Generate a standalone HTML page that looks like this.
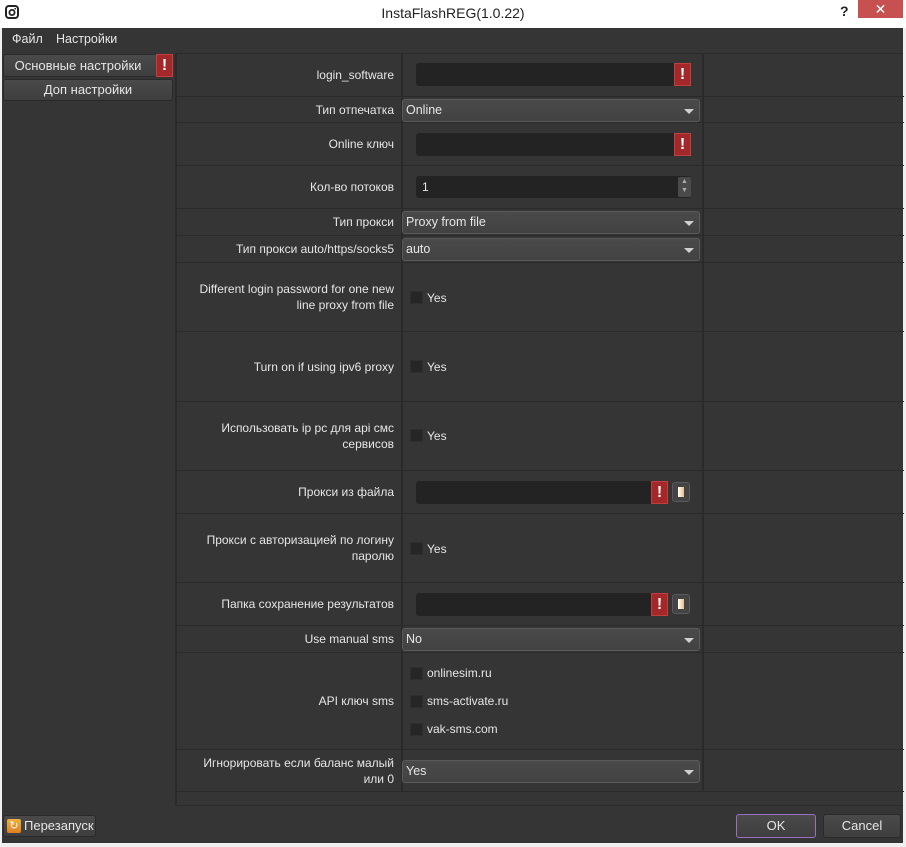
<!DOCTYPE html>
<html><head><meta charset="utf-8">
<style>
*{box-sizing:border-box;margin:0;padding:0}
body{width:906px;height:847px;background:#f0f0f0;font-family:"Liberation Sans","DejaVu Sans",sans-serif;font-size:12px;color:#e6e6e6;position:relative;overflow:hidden}
.a{position:absolute}
#title{left:0;top:0;width:906px;height:28px;background:#fff;color:#222;font-size:14px}
#main{left:2px;top:28px;width:901px;height:815px;background:#353535}
.row{position:absolute;left:175px;width:727px;border-bottom:1px solid #2a2a2a}
.lab{position:absolute;left:0;width:226px;top:0;bottom:0;display:flex;align-items:center;justify-content:flex-end;text-align:right;padding-right:7px;line-height:16px;border-right:2px solid #2a2a2a}
.mid{position:absolute;left:226px;width:301px;top:0;bottom:0;border-right:2px solid #2a2a2a}
.le{position:absolute;background:#232323;border-radius:3px}
.err{position:absolute;width:17px;background:#a3282a;border:1px solid #c04040;color:#fff;font-weight:bold;font-size:16px;text-align:center;line-height:21px}
.cb{position:absolute;left:7px;width:13px;height:13px;background:#262626;border:1px solid #2e2e2e}
.yes{position:absolute;left:24px}
.combo{position:absolute;left:225px;width:298px;height:23px;background:linear-gradient(#4a4a4a,#424242);border:1px solid #5a5a5a;border-radius:3px;padding-left:3px;line-height:21px;font-size:12.5px}
.combo:after{content:"";position:absolute;right:5px;top:9px;border-left:5px solid transparent;border-right:5px solid transparent;border-top:5px solid #d0d0d0}
.fb{position:absolute;width:18px;height:20px;background:#444;border:1px solid #5a5a5a;border-radius:3px}
.fb:after{content:"";position:absolute;left:5px;top:4px;width:6px;height:10px;background:linear-gradient(90deg,#fff,#e8c080)}
.btn{position:absolute;background:linear-gradient(#4a4a4a,#3e3e3e);border:1px solid #2a2a2a;border-radius:3px;text-align:center;font-size:13px}
</style></head><body>
<div id="title" class="a">
 <svg class="a" style="left:5px;top:5px" width="14" height="14" viewBox="0 0 14 14"><rect x="1" y="1" width="12" height="12" rx="3" fill="none" stroke="#222" stroke-width="2"/><circle cx="7" cy="7.5" r="2.6" fill="none" stroke="#222" stroke-width="1.8"/><rect x="9.5" y="3" width="1.5" height="1.5" fill="#222"/></svg>
 <div class="a" style="left:0;width:906px;top:5px;text-align:center">InstaFlashREG(1.0.22)</div>
 <div class="a" style="left:840px;top:3px;font-weight:bold;font-size:14px">?</div>
 <div class="a" style="left:858px;top:0;width:45px;height:18px;background:#c75050;color:#fff;text-align:center;font-size:14px;line-height:18px">✕</div>
</div>
<div id="main" class="a">
 <div class="a" style="left:10px;top:4px;font-size:12.5px">Файл</div>
 <div class="a" style="left:54px;top:4px;font-size:12.5px">Настройки</div>
 <div class="btn" style="left:1px;top:26px;width:170px;height:23px;line-height:21px;padding-right:20px">Основные настройки</div>
 <div class="err" style="left:154px;top:26px;height:23px">!</div>
 <div class="btn" style="left:1px;top:51px;width:170px;height:22px;line-height:20px">Доп настройки</div>
 <div class="a" style="left:173px;top:25px;width:728px;height:753px;border-left:2px solid #2a2a2a;border-top:1px solid #2a2a2a;border-bottom:1px solid #2a2a2a"></div>
 <div class="btn" style="left:1px;top:787px;width:93px;height:22px;line-height:20px;text-align:left;padding-left:20px">Перезапуск</div>
 <div class="a" style="left:5px;top:791px;width:14px;height:14px;background:linear-gradient(#f0b040,#e08020);border-radius:2px;color:#fff;font-size:11px;line-height:14px;text-align:center">↻</div>
 <div class="btn" style="left:734px;top:786px;width:80px;height:24px;line-height:22px;border:1px solid #9a70c0">OK</div>
 <div class="btn" style="left:821px;top:786px;width:78px;height:24px;line-height:22px">Cancel</div>
</div>
<div class="a" style="left:2px;top:28px">
<div class="row" style="top:25px;height:44px"><div class="lab">login_software</div><div class="mid"></div>
 <div class="le" style="left:239px;top:10px;width:275px;height:23px"></div><div class="err" style="left:497px;top:10px;height:23px">!</div></div>
<div class="row" style="top:69px;height:26px"><div class="lab">Тип отпечатка</div><div class="mid"></div><div class="combo" style="top:2px">Online</div></div>
<div class="row" style="top:95px;height:43px"><div class="lab">Online ключ</div><div class="mid"></div>
 <div class="le" style="left:239px;top:10px;width:275px;height:23px"></div><div class="err" style="left:497px;top:10px;height:23px">!</div></div>
<div class="row" style="top:138px;height:43px"><div class="lab">Кол-во потоков</div><div class="mid"></div>
 <div class="le" style="left:239px;top:10px;width:275px;height:22px;padding-left:6px;line-height:22px">1</div>
 <div class="a" style="left:501px;top:11px;width:13px;height:20px;background:#4a4a4a;border-radius:2px;color:#aaa;font-size:7px;line-height:9px;text-align:center">▲<br>▼</div></div>
<div class="row" style="top:181px;height:27px"><div class="lab">Тип прокси</div><div class="mid"></div><div class="combo" style="top:2px">Proxy from file</div></div>
<div class="row" style="top:208px;height:27px"><div class="lab">Тип прокси auto/https/socks5</div><div class="mid"></div><div class="combo" style="top:2px">auto</div></div>
<div class="row" style="top:235px;height:69px"><div class="lab">Different login password for one new<br>line proxy from file</div><div class="mid"><div class="cb" style="top:28px"></div><div class="yes" style="top:28px">Yes</div></div></div>
<div class="row" style="top:304px;height:70px"><div class="lab">Turn on if using ipv6 proxy</div><div class="mid"><div class="cb" style="top:28px"></div><div class="yes" style="top:28px">Yes</div></div></div>
<div class="row" style="top:374px;height:69px"><div class="lab">Использовать ip pc для api смс<br>сервисов</div><div class="mid"><div class="cb" style="top:27px"></div><div class="yes" style="top:27px">Yes</div></div></div>
<div class="row" style="top:443px;height:43px"><div class="lab">Прокси из файла</div><div class="mid"></div>
 <div class="le" style="left:239px;top:10px;width:252px;height:23px"></div><div class="err" style="left:474px;top:10px;height:23px">!</div><div class="fb" style="left:495px;top:11px"></div></div>
<div class="row" style="top:486px;height:69px"><div class="lab">Прокси с авторизацией по логину<br>паролю</div><div class="mid"><div class="cb" style="top:28px"></div><div class="yes" style="top:28px">Yes</div></div></div>
<div class="row" style="top:555px;height:43px"><div class="lab">Папка сохранение результатов</div><div class="mid"></div>
 <div class="le" style="left:239px;top:10px;width:252px;height:23px"></div><div class="err" style="left:474px;top:10px;height:23px">!</div><div class="fb" style="left:495px;top:11px"></div></div>
<div class="row" style="top:598px;height:27px"><div class="lab">Use manual sms</div><div class="mid"></div><div class="combo" style="top:2px">No</div></div>
<div class="row" style="top:625px;height:97px"><div class="lab">API ключ sms</div><div class="mid">
 <div class="cb" style="top:14px"></div><div class="yes" style="top:13px">onlinesim.ru</div>
 <div class="cb" style="top:42px"></div><div class="yes" style="top:41px">sms-activate.ru</div>
 <div class="cb" style="top:70px"></div><div class="yes" style="top:69px">vak-sms.com</div></div></div>
<div class="row" style="top:722px;height:42px"><div class="lab">Игнорировать если баланс малый<br>или 0</div><div class="mid"></div><div class="combo" style="top:10px">Yes</div></div>
</div>
</body></html>
